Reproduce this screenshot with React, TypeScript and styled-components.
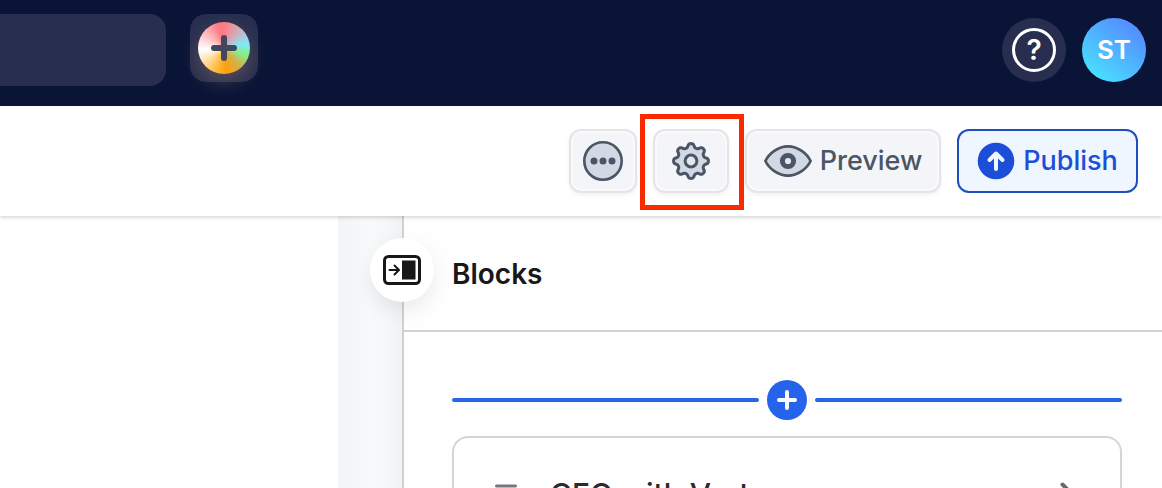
import React from "react";
import styled, { createGlobalStyle } from "styled-components";

const GlobalStyle = createGlobalStyle`
  *, *::before, *::after { box-sizing: border-box; }
  html, body, #root { height: 100%; }
  body {
    margin: 0;
    overflow: hidden;
    background: #ffffff;
    font-family: Inter, "Liberation Sans", sans-serif;
  }
  button, input {
    font: inherit;
    margin: 0;
  }
  button { cursor: pointer; }
  svg { display: block; flex: none; }
`;

const Page = styled.div`
  display: flex;
  flex-direction: column;
  height: 100vh;
  overflow: hidden;
`;

const TopBar = styled.header`
  display: flex;
  flex: none;
  align-items: flex-start;
  gap: 24px;
  padding: 14px 16px 20px 0;
  background: #091437;
`;

const Search = styled.input`
  width: 166px;
  height: 72px;
  padding: 0 24px;
  border: 0;
  border-radius: 0 16px 16px 0;
  background: #272e50;
  color: #ffffff;
  font-size: 24px;
`;

const CreateButton = styled.button`
  display: grid;
  place-items: center;
  width: 68px;
  height: 68px;
  padding: 0;
  border: 0;
  border-radius: 16px;
  background: #272e50;
`;

const ColorDisc = styled.span`
  display: grid;
  place-items: center;
  width: 52px;
  height: 52px;
  border-radius: 50%;
  background: conic-gradient(
    #ff7c84 0deg,
    #c9b4c0 45deg,
    #7fe8fa 80deg,
    #84f08c 105deg,
    #d3b04c 140deg,
    #ff9f0a 175deg,
    #ffc04d 205deg,
    #ffffff 265deg,
    #ffd9da 290deg,
    #ff7c84 345deg,
    #ff7c84 360deg
  );
  box-shadow: 0 8px 20px rgba(255, 190, 120, 0.24);
`;

const Account = styled.div`
  display: flex;
  gap: 16px;
  margin-left: auto;
  padding-top: 4px;
`;

const RoundButton = styled.button<{ $avatar?: boolean }>`
  display: grid;
  place-items: center;
  width: 64px;
  height: 64px;
  padding: 0;
  border: 0;
  border-radius: 50%;
  background: ${(p) =>
    p.$avatar ? "linear-gradient(38deg, #4ae0ff 12%, #4fb4ff 50%, #5588ff 90%)" : "#272e50"};
  color: #ffffff;
  font-size: 26px;
  font-weight: 600;
  line-height: 36px;
`;

const HelpRing = styled.span`
  display: grid;
  place-items: center;
  width: 44px;
  height: 44px;
  border: 3px solid #ffffff;
  border-radius: 50%;
  font-size: 28px;
  font-weight: 600;
`;

const Toolbar = styled.div`
  display: flex;
  position: relative;
  z-index: 2;
  flex: none;
  align-items: center;
  justify-content: flex-end;
  gap: 16px;
  height: 110px;
  padding-right: 24px;
  background: #ffffff;
  box-shadow: 0 2px 3px rgba(0, 0, 0, 0.14);
`;

const ToolButton = styled.button<{ $primary?: boolean; $width: number }>`
  display: flex;
  align-items: center;
  justify-content: center;
  gap: 8px;
  width: ${(p) => p.$width}px;
  height: 64px;
  padding: 0;
  border: 2px solid ${(p) => (p.$primary ? "#1d4fbf" : "#e5e5e8")};
  border-radius: 12px;
  background: ${(p) => (p.$primary ? "#eff6ff" : "#f4f5f8")};
  box-shadow: ${(p) =>
    p.$primary ? "none" : "inset 0 0 0 2px #fafafc, 0 2px 4px rgba(0, 0, 0, 0.06)"};
  color: ${(p) => (p.$primary ? "#1d4ed8" : "#4b5563")};
  font-size: 27px;
  font-weight: 500;
  line-height: 36px;
`;

const Highlighted = styled.div`
  position: relative;

  &::after {
    content: "";
    position: absolute;
    inset: -15px -15px -17px -13px;
    border: 5px solid #fa2a00;
    pointer-events: none;
  }
`;

const Workspace = styled.main`
  display: flex;
  flex: 1;
  min-height: 0;
`;

const Canvas = styled.section`
  width: 338px;
  flex: none;
  background: #ffffff;
`;

const Gutter = styled.div`
  width: 64px;
  flex: none;
  background: linear-gradient(90deg, #f3f4f6, #f8f9fa 50%, #f5f6f8 80%, #eff1f3);
`;

const Panel = styled.aside`
  position: relative;
  flex: 1;
  min-width: 0;
  border-left: 2px solid #cfd1d4;
  background: #fefefe;
`;

const CollapseButton = styled.button`
  display: grid;
  position: absolute;
  top: 22px;
  left: -34px;
  place-items: center;
  width: 64px;
  height: 64px;
  padding: 0;
  border: 0;
  border-radius: 50%;
  background: #ffffff;
  box-shadow: 0 8px 20px rgba(0, 0, 0, 0.08);
`;

const PanelHeader = styled.div`
  display: flex;
  align-items: center;
  height: 116px;
  padding: 2px 0 0 48px;
  border-bottom: 2px solid #cfd3d8;
`;

const PanelTitle = styled.h2`
  margin: 0;
  color: #18181b;
  font-size: 28px;
  font-weight: 600;
  line-height: 36px;
`;

const PanelBody = styled.div`
  padding: 48px 40px 0 48px;
`;

const InsertRow = styled.div`
  display: flex;
  align-items: center;
  gap: 8px;
  margin-bottom: 16px;
`;

const InsertLine = styled.span`
  flex: 1;
  height: 4px;
  border-radius: 2px;
  background: #2765e8;
`;

const InsertButton = styled.button`
  display: grid;
  place-items: center;
  width: 40px;
  height: 40px;
  padding: 0;
  border: 0;
  border-radius: 50%;
  background: #2563eb;
`;

const BlockCard = styled.button`
  display: flex;
  align-items: center;
  width: 100%;
  height: 116px;
  padding: 0 46px 0 40px;
  border: 2px solid #d4d5d8;
  border-radius: 16px;
  background: #ffffff;
  color: #2b2b2e;
  font-size: 30px;
  font-weight: 500;
  line-height: 36px;
  text-align: left;
`;

const BlockName = styled.span`
  flex: 1;
  padding-left: 32px;
`;

const PlusIcon = ({ size, stroke, color }: { size: number; stroke: number; color: string }) => (
  <svg width={size} height={size} viewBox={`0 0 ${size} ${size}`} aria-hidden="true">
    <path
      d={`M${size / 2} ${stroke / 2}V${size - stroke / 2}M${stroke / 2} ${size / 2}H${size - stroke / 2}`}
      stroke={color}
      strokeWidth={stroke}
      strokeLinecap="round"
    />
  </svg>
);

const MoreIcon = () => (
  <svg width="40" height="40" viewBox="0 0 40 40" aria-hidden="true">
    <circle cx="20" cy="20" r="18.7" fill="#d3d9e4" stroke="#4b5563" strokeWidth="2.6" />
    <circle cx="11" cy="20" r="3.5" fill="#4b5563" />
    <circle cx="20" cy="20" r="3.5" fill="#4b5563" />
    <circle cx="29" cy="20" r="3.5" fill="#4b5563" />
  </svg>
);

const gearPath = (() => {
  const points: string[] = [];
  for (let i = 0; i <= 160; i++) {
    const a = (i / 160) * Math.PI * 2;
    const wave = Math.cos(8 * a);
    const r = 15.5 + 2.1 * Math.tanh(wave * 1.5);
    points.push(`${(20 + r * Math.sin(a)).toFixed(2)} ${(20 - r * Math.cos(a)).toFixed(2)}`);
  }
  return `M${points.join("L")}Z`;
})();

const GearIcon = () => (
  <svg width="40" height="40" viewBox="0 0 40 40" aria-hidden="true">
    <path d={gearPath} fill="#d3d9e4" stroke="#4b5563" strokeWidth="3" strokeLinejoin="round" />
    <circle cx="20" cy="20" r="5.9" fill="#e4e8ee" stroke="#4b5563" strokeWidth="3" />
  </svg>
);

const EyeIcon = () => (
  <svg width="48" height="32" viewBox="0 0 48 32" aria-hidden="true">
    <path
      d="M1.4 16C5 8.5 14 1.4 24 1.4S43 8.5 46.6 16C43 23.5 34 30.6 24 30.6S5 23.5 1.4 16Z"
      fill="#d3d9e4"
      stroke="#4b5563"
      strokeWidth="2.7"
      strokeLinejoin="round"
    />
    <circle cx="24" cy="16" r="5.6" fill="#e4e8ee" stroke="#4b5563" strokeWidth="5" />
  </svg>
);

const PublishIcon = () => (
  <svg width="38" height="38" viewBox="0 0 38 38" aria-hidden="true">
    <circle cx="19" cy="19" r="18.3" fill="#1d4ed8" />
    <path
      d="M19 27V12M12.5 18L19 11.5L25.5 18"
      fill="none"
      stroke="#eff6ff"
      strokeWidth="4"
      strokeLinecap="round"
      strokeLinejoin="round"
    />
  </svg>
);

const CollapseIcon = () => (
  <svg width="38" height="30" viewBox="0 0 38 30" aria-hidden="true">
    <rect x="1.5" y="1.5" width="35" height="27" rx="4" fill="#fff" stroke="#18181b" strokeWidth="3" />
    <rect x="19" y="5.5" width="13.5" height="19" fill="#18181b" />
    <path
      d="M6.5 15H15.5M11.5 10.5L16 15L11.5 19.5"
      fill="none"
      stroke="#18181b"
      strokeWidth="2"
      strokeLinecap="round"
      strokeLinejoin="round"
    />
  </svg>
);

const DragIcon = () => (
  <svg width="24" height="20" viewBox="0 0 24 20" aria-hidden="true">
    <path d="M2.5 2H21.5M2.5 10H21.5M2.5 18H21.5" stroke="#76777b" strokeWidth="3" strokeLinecap="round" />
  </svg>
);

const ChevronIcon = () => (
  <svg width="14" height="24" viewBox="0 0 14 24" aria-hidden="true">
    <path
      d="M2.5 2.5L12 12L2.5 21.5"
      fill="none"
      stroke="#6a6b6f"
      strokeWidth="4"
      strokeLinecap="round"
      strokeLinejoin="round"
    />
  </svg>
);

export default function App() {
  return (
    <>
      <GlobalStyle />
      <Page>
        <TopBar>
          <Search type="search" aria-label="Search" />
          <CreateButton type="button" aria-label="Create">
            <ColorDisc>
              <PlusIcon size={26} stroke={6} color="#43475e" />
            </ColorDisc>
          </CreateButton>
          <Account>
            <RoundButton type="button" aria-label="Help">
              <HelpRing>?</HelpRing>
            </RoundButton>
            <RoundButton type="button" $avatar>
              ST
            </RoundButton>
          </Account>
        </TopBar>

        <Toolbar>
          <ToolButton type="button" $width={68} aria-label="More">
            <MoreIcon />
          </ToolButton>
          <Highlighted>
            <ToolButton type="button" $width={76} aria-label="Settings">
              <GearIcon />
            </ToolButton>
          </Highlighted>
          <ToolButton type="button" $width={196}>
            <EyeIcon />
            Preview
          </ToolButton>
          <ToolButton type="button" $width={181} $primary>
            <PublishIcon />
            Publish
          </ToolButton>
        </Toolbar>

        <Workspace>
          <Canvas aria-label="Page canvas" />
          <Gutter />
          <Panel>
            <PanelHeader>
              <PanelTitle>Blocks</PanelTitle>
            </PanelHeader>
            <CollapseButton type="button" aria-label="Collapse panel">
              <CollapseIcon />
            </CollapseButton>
            <PanelBody>
              <InsertRow>
                <InsertLine />
                <InsertButton type="button" aria-label="Add block">
                  <PlusIcon size={20} stroke={4} color="#ffffff" />
                </InsertButton>
                <InsertLine />
              </InsertRow>
              <BlockCard type="button">
                <DragIcon />
                <BlockName>CEO with Vertex</BlockName>
                <ChevronIcon />
              </BlockCard>
            </PanelBody>
          </Panel>
        </Workspace>
      </Page>
    </>
  );
}
